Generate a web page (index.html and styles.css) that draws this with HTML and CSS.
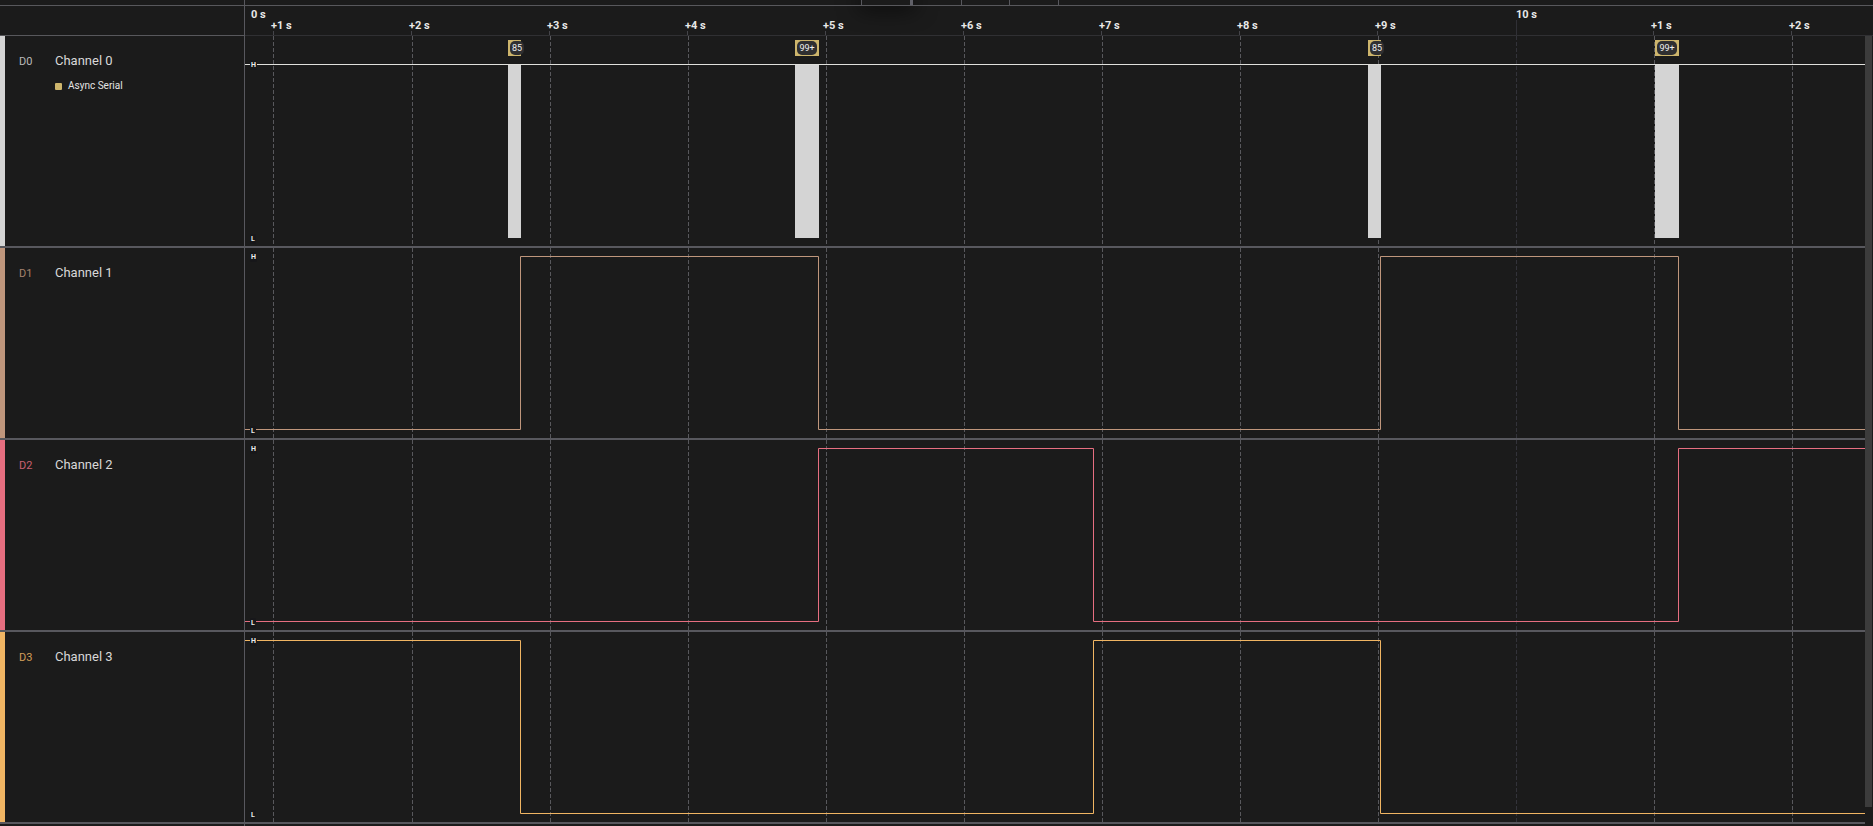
FILE: index.html
```html
<!DOCTYPE html>
<html lang="en">
<head>
<meta charset="utf-8">
<title>Logic capture</title>
<link rel="stylesheet" href="styles.css">
</head>
<body>
<div class="app">
  <header class="toolbar">
    <div class="toolbar-side"></div>
    <div class="toolbar-tabs">
      <span class="tab tab-active"></span><span class="tab tab-a"></span><span class="tab tab-b"></span><span class="tab tab-b"></span>
    </div>
  </header>
  <div class="ruler">
    <div class="ruler-side"></div>
    <div class="ruler-track">
      <span class="origin">0 s</span>
      <div class="ticks">
        <span class="tick">+1 s</span><span class="tick">+2 s</span><span class="tick">+3 s</span><span class="tick">+4 s</span><span class="tick">+5 s</span><span class="tick">+6 s</span><span class="tick">+7 s</span><span class="tick">+8 s</span><span class="tick">+9 s</span><span class="tick major">10 s</span><span class="tick">+1 s</span><span class="tick">+2 s</span>
      </div>
    </div>
  </div>
  <main class="body">
    <div class="channels">
      <svg class="defs" width="0" height="0" aria-hidden="true">
        <defs>
          <g id="grid">
            <path class="grid" d="M28.5 0V210M167.5 0V210M305.5 0V210M443.5 0V210M581.5 0V210M719.5 0V210M857.5 0V210M995.5 0V210M1133.5 0V210M1409.5 0V210M1547.5 0V210"/>
            <path class="grid grid-major" d="M1271.5 0V210"/>
          </g>
        </defs>
      </svg>
      <section class="channel channel-0">
        <div class="side">
          <span class="id">D0</span>
          <div class="names"><h2 class="name">Channel 0</h2><p class="analyzer">Async Serial</p></div>
        </div>
        <div class="track">
          <svg class="wave" aria-hidden="true">
            <use href="#grid"/>
            <path class="signal" d="M0 28.5H3000"/>
            <path class="burst" d="M263 29h13v173h-13zM550 29h24v173h-24zM1123 29h13v173h-13zM1410 29h24v173h-24z"/>
            <path class="frame" d="M263 4h13v16h-13zM550 4h24v16h-24zM1123 4h13v16h-13zM1410 4h24v16h-24z"/>
            <g class="pill">
              <rect x="265" y="5" width="14" height="14" rx="5"/><rect x="552" y="5" width="20" height="14" rx="5"/><rect x="1125" y="5" width="14" height="14" rx="5"/><rect x="1412" y="5" width="20" height="14" rx="5"/>
            </g>
            <g class="count">
              <text x="272" y="15">85</text><text x="562" y="15">99+</text><text x="1132" y="15">85</text><text x="1422" y="15">99+</text>
            </g>
          </svg>
          <div class="levels"><span>H</span><span>L</span></div>
        </div>
      </section>
      <section class="channel channel-1">
        <div class="side"><span class="id">D1</span><div class="names"><h2 class="name">Channel 1</h2></div></div>
        <div class="track">
          <svg class="wave" aria-hidden="true"><use href="#grid"/>
            <path class="signal" d="M0 181.5H275.5V8.5H573.5V181.5H1135.5V8.5H1433.5V181.5H3000"/></svg>
          <div class="levels"><span>H</span><span>L</span></div>
        </div>
      </section>
      <section class="channel channel-2">
        <div class="side"><span class="id">D2</span><div class="names"><h2 class="name">Channel 2</h2></div></div>
        <div class="track">
          <svg class="wave" aria-hidden="true"><use href="#grid"/>
            <path class="signal" d="M0 181.5H573.5V8.5H848.5V181.5H1433.5V8.5H3000"/></svg>
          <div class="levels"><span>H</span><span>L</span></div>
        </div>
      </section>
      <section class="channel channel-3">
        <div class="side"><span class="id">D3</span><div class="names"><h2 class="name">Channel 3</h2></div></div>
        <div class="track">
          <svg class="wave" aria-hidden="true"><use href="#grid"/>
            <path class="signal" d="M0 8.5H275.5V181.5H848.5V8.5H1135.5V181.5H3000"/></svg>
          <div class="levels"><span>H</span><span>L</span></div>
        </div>
      </section>
      <div class="tail"></div>
    </div>
    <div class="scrollbar"><div class="thumb"></div></div>
  </main>
</div>
</body>
</html>
```
FILE: styles.css
```css
* { box-sizing: border-box; }

body {
  margin: 0;
  background: #1b1b1b;
  color: #d8d8d8;
  font-family: Roboto, "Liberation Sans", sans-serif;
}

.app {
  height: 100vh;
  display: flex;
  flex-direction: column;
  overflow: hidden;
}

/* Toolbar */
.toolbar { display: flex; height: 5px; }
.toolbar-side { width: 245px; flex: none; border-right: 1px solid #58585e; }
.toolbar-tabs { flex: 1; display: flex; padding-left: 616px; }
.tab { flex: none; border-right: 1px solid #58585e; }
.tab-active {
  width: 52px;
  border-left: 1px solid #58585e;
  border-right: 3px solid #606068;
  background: #1b1b1b;
  box-shadow: 0 0 22px 2px #000;
}
.tab-a { width: 49px; }
.tab-b { width: 48px; }
.tab-b + .tab-b { width: 49px; }

/* Time ruler */
.ruler {
  position: relative;
  display: flex;
  height: 31px;
  border-top: 1px solid #58585c;
}
.ruler-side {
  width: 245px;
  flex: none;
  border-right: 1px solid #58585e;
  border-bottom: 1px solid #58585c;
}
.ruler-track {
  flex: 1;
  min-width: 0;
  overflow: hidden;
  position: relative;
  border-bottom: 1px solid #303033;
  font-size: 11px;
  line-height: 12px;
  font-weight: 700;
  color: #e8e8e8;
}
.origin { position: absolute; left: 6px; top: 3px; }
.ticks { display: flex; height: 100%; padding-left: 26px; }
.tick {
  position: relative;
  width: 138px;
  flex: none;
  padding-top: 14px;
}
.tick::after {
  content: "";
  position: absolute;
  left: 2px;
  bottom: 0;
  width: 1px;
  height: 4px;
  background: #45454a;
}
.tick.major { padding: 3px 0 0 3px; }
.tick.major::after { height: 15px; left: 3px; background: #303036; }

/* Channel rows */
.body { flex: 1; min-height: 0; display: flex; padding-right: 1px; }
.channels {
  flex: 1;
  min-width: 0;
  display: flex;
  flex-direction: column;
  overflow: hidden;
}
.defs { position: absolute; }
.channel {
  display: flex;
  flex: none;
  min-height: 192px;
  border-bottom: 2px solid #58585e;
}
.channel-0 { min-height: 212px; --tone: #d4d4d4; --signal: #e0e0dc; }
.channel-1 { --tone: #bf967c; --signal: #bf967c; }
.channel-2 { --tone: #e66e80; --signal: #e66e80; }
.channel-3 { --tone: #f0b563; --signal: #f0b563; }

.side {
  width: 245px;
  flex: none;
  display: flex;
  padding: 17px 0 0 14px;
  border-left: 5px solid var(--tone);
  border-right: 1px solid #58585e;
}
.id { width: 36px; font-size: 11px; line-height: 16px; color: var(--tone); opacity: 0.85; padding-top: 1px; }
.name { margin: 0; font-size: 13px; line-height: 16px; font-weight: 400; }
.analyzer {
  display: flex;
  align-items: center;
  gap: 6px;
  margin: 9px 0 0;
  font-size: 10px;
  line-height: 16px;
  color: #e4e4e4;
}
.analyzer::before {
  content: "";
  width: 7px;
  height: 7px;
  border-radius: 1px;
  background: #cdb56c;
}

.track { position: relative; flex: 1; min-width: 0; overflow: hidden; }
.wave { position: absolute; width: 100%; height: 100%; }
.grid { fill: none; stroke: #58585c; stroke-dasharray: 4 2; }
.grid-major { stroke: #33333a; }
.signal { fill: none; stroke: var(--signal); }
.burst { fill: #d4d4d4; }
.frame { fill: #cdb56c; }
.pill { fill: #2f2f31; }
.count { fill: #f0f0f0; font-size: 9px; text-anchor: middle; }

.levels {
  position: absolute;
  top: 4px;
  bottom: 2px;
  left: 5px;
  display: flex;
  flex-direction: column;
  justify-content: space-between;
  align-items: flex-start;
  font-size: 7px;
  line-height: 10px;
  font-weight: 700;
  color: #ececec;
}
.channel-0 .levels { top: 24px; }
.levels span { padding: 0 1px; background: #17171a; border-radius: 2px; }

.tail { width: 245px; flex: 1; border-right: 1px solid #58585e; }

.scrollbar { width: 7px; flex: none; }
.thumb { height: calc(100% - 19px); background: #3c3c3c; }
```
